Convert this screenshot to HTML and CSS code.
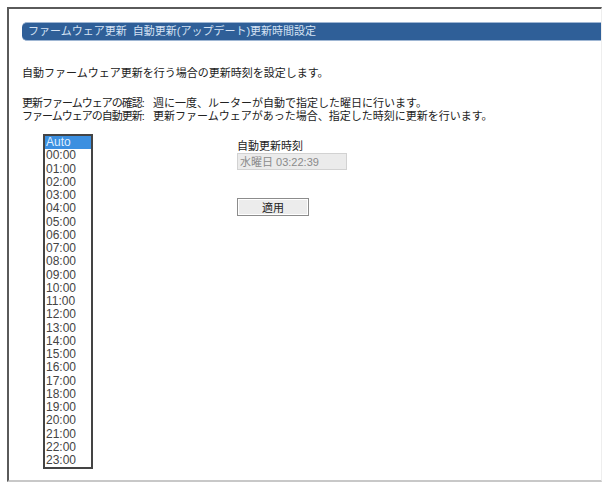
FILE: index.html
```html
<!DOCTYPE html>
<html lang="ja">
<head>
  <meta charset="utf-8">
  <title>ファームウェア更新</title>
  <link rel="stylesheet" href="styles.css">
</head>
<body>
  <div class="frame">
    <div class="title-bar">ファームウェア更新&nbsp;&nbsp;自動更新(アップデート)更新時間設定</div>

    <p class="lead">自動ファームウェア更新を行う場合の更新時刻を設定します。</p>

    <div class="notes">
      <span class="note-label">更新ファームウェアの確認:</span>
      <span>週に一度、ルーターが自動で指定した曜日に行います。</span>
      <span class="note-label">ファームウェアの自動更新:</span>
      <span>更新ファームウェアがあった場合、指定した時刻に更新を行います。</span>
    </div>

    <div class="settings">
      <ul class="hour-list">
        <li class="selected">Auto</li>
        <li>00:00</li>
        <li>01:00</li>
        <li>02:00</li>
        <li>03:00</li>
        <li>04:00</li>
        <li>05:00</li>
        <li>06:00</li>
        <li>07:00</li>
        <li>08:00</li>
        <li>09:00</li>
        <li>10:00</li>
        <li>11:00</li>
        <li>12:00</li>
        <li>13:00</li>
        <li>14:00</li>
        <li>15:00</li>
        <li>16:00</li>
        <li>17:00</li>
        <li>18:00</li>
        <li>19:00</li>
        <li>20:00</li>
        <li>21:00</li>
        <li>22:00</li>
        <li>23:00</li>
      </ul>

      <div class="time-box">
        <div class="time-label">自動更新時刻</div>
        <div class="time-value">水曜日 03:22:39</div>
        <button class="apply">適用</button>
      </div>
    </div>
  </div>
</body>
</html>
```

FILE: styles.css
```css
body {
  margin: 0;
  background: #fff;
  color: #222;
  font-family: "Liberation Sans", "Noto Sans CJK JP", sans-serif;
  font-size: 11px;
}

.frame {
  margin: 7px 5px 0 7px;
  height: 475px;
  border-left: 2px solid #5a5a5a;
  border-top: 2px solid #5a5a5a;
  border-right: 1px solid #eee;
  border-bottom: 2px solid #c8c8c8;
  box-sizing: border-box;
}

.title-bar {
  margin: 13px 0 0 13px;
  height: 17px;
  line-height: 17px;
  padding-left: 6px;
  background: #2f5f98;
  border-top: 1px solid #9fb6d3;
  border-bottom: 1px solid #9fb6d3;
  border-radius: 5px 0 0 5px;
  color: #d4e2f4;
  font-size: 11px;
  white-space: nowrap;
}

.lead {
  margin: 25px 0 0 13px;
  line-height: 14px;
}

.notes {
  display: grid;
  grid-template-columns: 131px auto;
  margin: 17px 0 0 13px;
  line-height: 13px;
}

.note-label {
  letter-spacing: -1px;
}

.settings {
  display: flex;
  margin: 11px 0 0 34px;
}

.hour-list {
  list-style: none;
  margin: 0;
  padding: 0;
  width: 46px;
  border: 2px solid #444;
  font-size: 12px;
  color: #444;
}

.hour-list li {
  height: 13.25px;
  line-height: 13px;
  padding-left: 1px;
}

.hour-list li.selected {
  background: #3b8fe0;
  color: #dfeeff;
}

.time-box {
  margin: 6px 0 0 144px;
  display: flex;
  flex-direction: column;
  align-items: flex-start;
}

.time-label {
  line-height: 13px;
}

.time-value {
  width: 110px;
  height: 17px;
  line-height: 17px;
  padding-left: 2px;
  box-sizing: border-box;
  background: #ebebeb;
  border: 1px solid #d2d2d2;
  color: #8a8a8a;
}

.apply {
  margin-top: 28px;
  width: 72px;
  height: 18px;
  padding: 0;
  background: #ececec;
  border: 1px solid #8c8c8c;
  box-shadow: inset 0 0 0 1px #fff;
  font-family: inherit;
  font-size: 11px;
  color: #222;
}
```
